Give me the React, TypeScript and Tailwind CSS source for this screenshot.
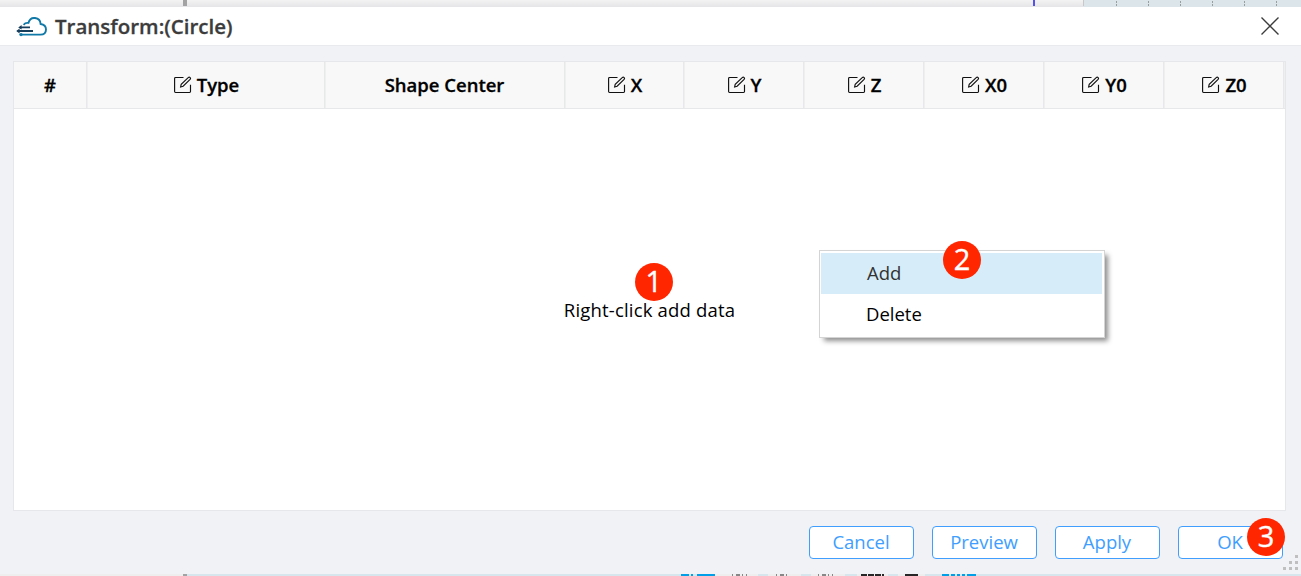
import React from "react";

const columns = [
  { label: "#", editable: false, width: "w-[73px]" },
  { label: "Type", editable: true, width: "w-[238px]" },
  { label: "Shape Center", editable: false, width: "w-[240px]" },
  { label: "X", editable: true, width: "w-[119px]" },
  { label: "Y", editable: true, width: "w-[120px]" },
  { label: "Z", editable: true, width: "w-[120px]" },
  { label: "X0", editable: true, width: "w-[120px]" },
  { label: "Y0", editable: true, width: "w-[120px]" },
  { label: "Z0", editable: true, width: "w-[120px]" },
];

function CloudLogo() {
  return (
    <svg width="32" height="22" viewBox="0 0 32 22" fill="none" className="relative top-px -left-px shrink-0">
      <path
        d="M8 9.2C8.2 7.4 10 6.6 12.4 6.9C13.4 3.4 16 1.6 19 2C22.4 2.4 24.4 4.6 24.6 8C28.2 8.6 30 10.8 30 13.4C30 16.8 27.6 18.6 24.4 18.6H5"
        stroke="#1179a8"
        strokeWidth="1.9"
      />
      <path d="M4 11.4H14M1.5 15H17" stroke="#173f5c" strokeWidth="1.9" />
      <path d="M5.6 9L2.2 11.4L5.6 13.4ZM3.6 12.4L0.2 15L3.6 17.4Z" fill="#173f5c" />
      <circle cx="5" cy="18.6" r="1.7" fill="#1179a8" />
    </svg>
  );
}

function EditIcon() {
  return (
    <svg width="18" height="18" viewBox="0 0 18 18" fill="none" stroke="#111" strokeWidth="1.15" className="shrink-0">
      <path d="M9.5 1.5H1.5Q.6 1.5.6 2.4V15.6Q.6 16.5 1.5 16.5H15.6Q16.5 16.5 16.5 15.6V8.8" />
      <path d="M6.6 11L7.2 8.3L14.2 1.6Q15.2.8 16.2 1.6Q17 2.4 16.1 3.4L9.1 10.2Z" />
    </svg>
  );
}

function Badge({ value, place }: { value: number; place: string }) {
  return (
    <span
      className={`absolute flex h-[38px] w-[38px] items-center justify-center rounded-full bg-[#ff2600] pb-[3px] text-[29px] leading-none tracking-normal text-white [-webkit-text-stroke:0.4px_white] ${place}`}
    >
      {value}
    </span>
  );
}

function DialogButton({ children }: { children: React.ReactNode }) {
  return (
    <button className="relative flex h-[33px] w-[105px] items-center justify-center rounded-[4px] border border-[#409eff] bg-white pr-px text-[18.5px] leading-none text-[#409eff]">
      {children}
    </button>
  );
}

function TopStrip() {
  return (
    <svg width="1301" height="7" className="block shrink-0">
      <defs>
        <linearGradient id="shade" x1="0" y1="0" x2="0" y2="1">
          <stop offset="0" stopColor="#f3f3f3" />
          <stop offset="1" stopColor="#e5e5e8" />
        </linearGradient>
      </defs>
      <rect width="1301" height="7" fill="url(#shade)" />
      <rect x="1083" width="218" height="7" fill="#dce5e9" />
      <rect x="1083" width="1" height="6" fill="#c8c8c8" />
      <rect x="183" width="4" height="6" fill="#a3a3a3" />
      <rect x="1033" width="2" height="6" fill="#5551ee" />
      <path d="M1116.5 1V6M1148.5 1V6M1180.5 1V6M1212.5 1V6M1244.5 1V6M1276.5 1V6" stroke="#9a9ea1" strokeDasharray="2 1" />
    </svg>
  );
}

function BottomStrip() {
  return (
    <svg width="1301" height="2" className="block shrink-0">
      <rect width="184" height="2" fill="#eeeeee" />
      <rect x="184" width="1117" height="2" fill="#d7e5ed" />
      <rect x="183" width="4" height="2" fill="#a3a3a3" />
      <path d="M715 1H758M768 1H801M811 1H845M857 1H888M898 1H925" stroke="#eeeeee" strokeWidth="2" />
      <path d="M681 1H689M691 1H693M697 1H715" stroke="#009fe8" strokeWidth="2" />
      <path d="M942 1H949M951 1H955M957 1H960M962 1H965M967 1H976" stroke="#009fe8" strokeWidth="2" />
      <path d="M732 1H747M776 1H789M818 1H833" stroke="#888" strokeWidth="2" strokeDasharray="1 3 4 2" />
      <path d="M861 1H884" stroke="#272727" strokeWidth="2" strokeDasharray="6 1" />
      <path d="M905 1H918" stroke="#272727" strokeWidth="2" />
    </svg>
  );
}

export default function App() {
  return (
    <div className="flex h-[576px] w-[1301px] flex-col overflow-hidden bg-[#f0f2f5] font-['Open_Sans',sans-serif] text-black">
      <TopStrip />
      <main className="relative flex h-[567px] flex-col bg-[#f0f2f5]">
        <header className="flex h-[39px] shrink-0 items-center justify-between border-b border-[#e8eaed] bg-white pr-[22px] pl-[17px]">
          <div className="flex items-center gap-[6px]">
            <CloudLogo />
            <h1 className="pb-px text-[20.5px] leading-6 font-semibold text-[#3c3c3c] [-webkit-text-stroke:0.3px_#3c3c3c]">
              Transform:(Circle)
            </h1>
          </div>
          <svg width="18" height="18" viewBox="0 0 18 18" stroke="#3c3c3c" strokeWidth="1.4">
            <path d="M.5.5L17.5 17.5M17.5.5L.5 17.5" />
          </svg>
        </header>

        <section className="mt-[15px] ml-[13px] flex h-[450px] w-[1273px] shrink-0 flex-col border border-[#e5e7ea] bg-white">
          <div className="flex h-[47px] shrink-0 border-b border-[#e6e8ea] bg-[#f8f8f8]">
            {columns.map((column) => (
              <div
                key={column.label}
                className={`flex shrink-0 items-center justify-center gap-[5px] border-r border-[#e6e8ea] text-[18.5px] font-semibold shadow-[1px_0_0_#efefef] [-webkit-text-stroke:0.3px_black] ${column.editable ? "pl-[2px]" : ""} ${column.width}`}
              >
                {column.editable && <EditIcon />}
                <span>{column.label}</span>
              </div>
            ))}
          </div>
          <div className="flex flex-1 items-center justify-center">
            <p className="relative text-[18.5px] leading-6 tracking-[0.18px]">
              Right-click add data
              <Badge value={1} place="-top-[35px] left-[71px]" />
            </p>
          </div>
        </section>

        <footer className="mt-[15px] flex gap-[18px] pl-[809px]">
          <DialogButton>Cancel</DialogButton>
          <DialogButton>Preview</DialogButton>
          <DialogButton>Apply</DialogButton>
          <DialogButton>
            OK
            <Badge value={3} place="-top-[9px] left-[68px]" />
          </DialogButton>
        </footer>

        <svg width="16" height="16" className="absolute right-[2px] bottom-[3px]" fill="#bfbfbf">
          <path d="M12 0h3v3h-3zM6 6h3v3H6zM12 6h3v3h-3zM0 12h3v3H0zM6 12h3v3H6zM12 12h3v3h-3z" />
        </svg>

        <div className="absolute top-[243px] left-[819px] flex h-[88px] w-[286px] flex-col border border-[#d4d4d4] bg-white px-px pt-[2px] text-[18.5px] shadow-[4px_4px_5px_-1px_#8f8f8f]">
          <div className="mr-px flex h-[41px] items-center bg-[#d6edf9] pb-[2px] pl-[46px] text-[#333]">Add</div>
          <div className="flex h-[41px] items-center pb-[2px] pl-[45px]">Delete</div>
          <Badge value={2} place="-top-[10px] left-[123px]" />
        </div>
      </main>
      <BottomStrip />
    </div>
  );
}
